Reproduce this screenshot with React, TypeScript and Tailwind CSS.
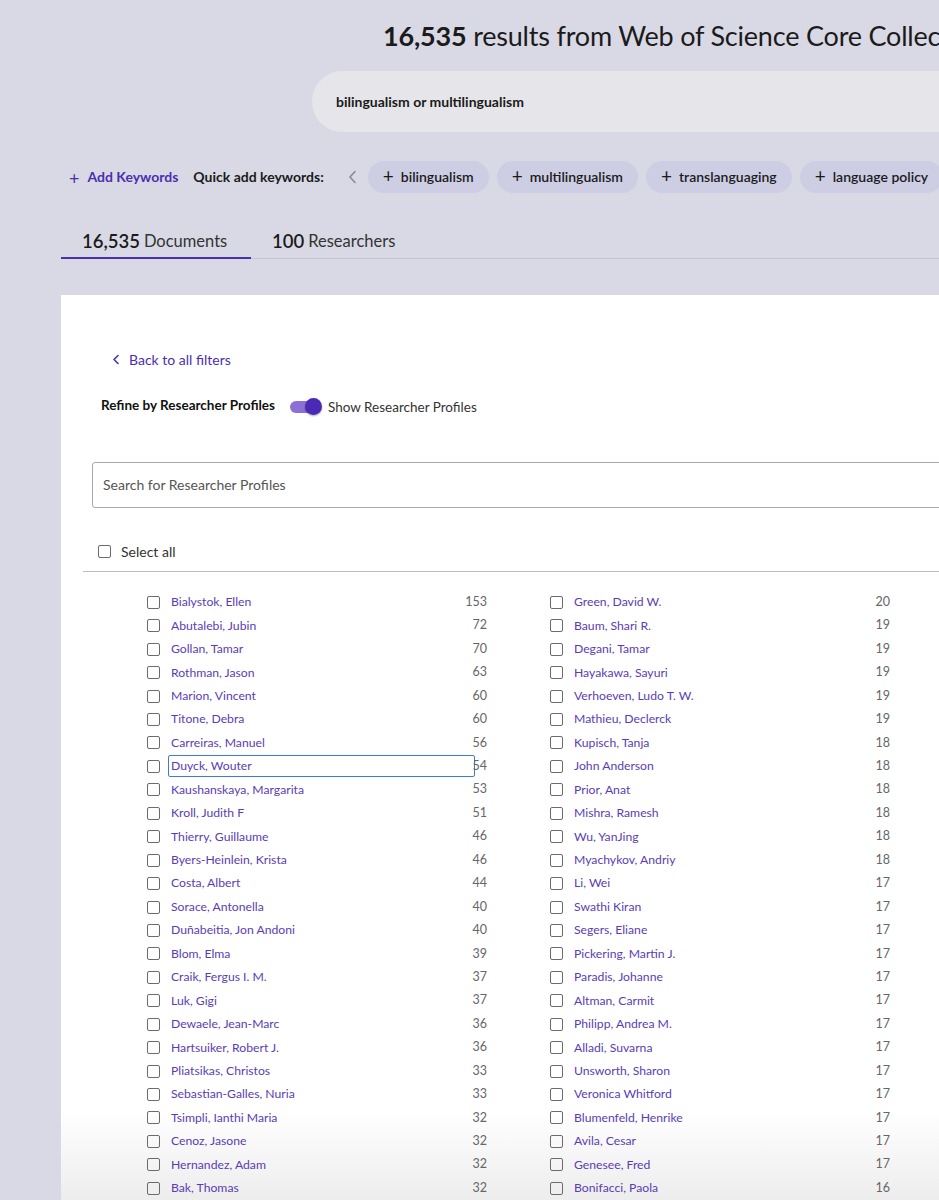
import React from "react";

const left: [string, number][] = [
  ["Bialystok, Ellen", 153],
  ["Abutalebi, Jubin", 72],
  ["Gollan, Tamar", 70],
  ["Rothman, Jason", 63],
  ["Marion, Vincent", 60],
  ["Titone, Debra", 60],
  ["Carreiras, Manuel", 56],
  ["Duyck, Wouter", 54],
  ["Kaushanskaya, Margarita", 53],
  ["Kroll, Judith F", 51],
  ["Thierry, Guillaume", 46],
  ["Byers-Heinlein, Krista", 46],
  ["Costa, Albert", 44],
  ["Sorace, Antonella", 40],
  ["Duñabeitia, Jon Andoni", 40],
  ["Blom, Elma", 39],
  ["Craik, Fergus I. M.", 37],
  ["Luk, Gigi", 37],
  ["Dewaele, Jean-Marc", 36],
  ["Hartsuiker, Robert J.", 36],
  ["Pliatsikas, Christos", 33],
  ["Sebastian-Galles, Nuria", 33],
  ["Tsimpli, Ianthi Maria", 32],
  ["Cenoz, Jasone", 32],
  ["Hernandez, Adam", 32],
  ["Bak, Thomas", 32],
];

const right: [string, number][] = [
  ["Green, David W.", 20],
  ["Baum, Shari R.", 19],
  ["Degani, Tamar", 19],
  ["Hayakawa, Sayuri", 19],
  ["Verhoeven, Ludo T. W.", 19],
  ["Mathieu, Declerck", 19],
  ["Kupisch, Tanja", 18],
  ["John Anderson", 18],
  ["Prior, Anat", 18],
  ["Mishra, Ramesh", 18],
  ["Wu, YanJing", 18],
  ["Myachykov, Andriy", 18],
  ["Li, Wei", 17],
  ["Swathi Kiran", 17],
  ["Segers, Eliane", 17],
  ["Pickering, Martin J.", 17],
  ["Paradis, Johanne", 17],
  ["Altman, Carmit", 17],
  ["Philipp, Andrea M.", 17],
  ["Alladi, Suvarna", 17],
  ["Unsworth, Sharon", 17],
  ["Veronica Whitford", 17],
  ["Blumenfeld, Henrike", 17],
  ["Avila, Cesar", 17],
  ["Genesee, Fred", 17],
  ["Bonifacci, Paola", 16],
];

function Box() {
  return <span className="block w-[13px] h-[13px] shrink-0 border-[1.5px] border-[#6b6b6b] rounded-[2px]" />;
}

function Row({ name, count, focused }: { name: string; count: number; focused?: boolean }) {
  return (
    <div className="flex items-center h-[23.45px]">
      <Box />
      <span
        className={
          "ml-[9px] w-[305px] shrink-0 h-[20px] flex items-center pl-[2px] text-[12.2px] text-[#5a3db5] whitespace-nowrap " +
          (focused ? "outline outline-[1.5px] outline-[#3b7bdb] rounded-[1px]" : "")
        }
      >
        {name}
      </span>
      <span className="ml-[-30px] w-[43px] text-right text-[12.5px] text-[#666]">{count}</span>
    </div>
  );
}

function Chip({ label }: { label: string }) {
  return (
    <div className="h-[32px] rounded-full bg-[#cdcde4] flex items-center px-[15px] gap-[7px] text-[14px] font-semibold text-[#1b1b1b] whitespace-nowrap shrink-0">
      <span className="text-[19px] font-normal leading-none mt-[-2px]">+</span>
      <span>{label}</span>
    </div>
  );
}

export default function App() {
  return (
    <div
      className="relative w-full h-[1200px] overflow-hidden bg-[#d9d9e5] text-[#1b1b1b]"
      style={{ fontFamily: "Lato, 'Noto Sans', sans-serif" }}
    >
      <div className="flex flex-col w-[1300px] h-full">
        {/* header */}
        <div className="pt-[20px] pl-[383px] h-[73px] whitespace-nowrap text-[27px] leading-[32px] tracking-[-0.2px]">
          <span className="font-bold">16,535</span> results from Web of Science Core Collection
        </div>

        {/* search pill */}
        <div className="ml-[312px] w-[900px] h-[62px] rounded-[31px] bg-[#e6e6ea] flex items-center pl-[24px] text-[14px] font-bold">
          bilingualism or multilingualism
        </div>

        {/* keywords */}
        <div className="mt-[29px] h-[32px] ml-[69px] flex items-center whitespace-nowrap">
          <span className="text-[#4b2fb0] text-[18px] leading-none mt-[2px]">+</span>
          <span className="ml-[8px] text-[14px] font-bold text-[#4b2fb0]">Add Keywords</span>
          <span className="ml-[15px] text-[14px] font-bold">Quick add keywords:</span>
          <svg className="ml-[24px]" width="9" height="14" viewBox="0 0 9 14" fill="none">
            <path d="M7 1.5 L2 7 L7 12.5" stroke="#8a8a96" strokeWidth="1.6" strokeLinecap="round" strokeLinejoin="round" />
          </svg>
          <div className="ml-[11px] flex gap-[8px]">
            <Chip label="bilingualism" />
            <Chip label="multilingualism" />
            <Chip label="translanguaging" />
            <Chip label="language policy" />
          </div>
        </div>

        {/* tabs */}
        <div className="mt-[28px] ml-[61px] flex border-b border-[#c4c4cf] h-[39px]">
          <div className="w-[190px] border-b-2 border-[#4b2fb0] mb-[-1px] pl-[21px] pt-[8px] flex items-start whitespace-nowrap">
            <span className="text-[18.5px] font-semibold leading-[24px]">16,535</span>
            <span className="ml-[4px] text-[16.5px] leading-[24px] text-[#333]">Documents</span>
          </div>
          <div className="ml-[21px] pt-[8px] flex items-start whitespace-nowrap">
            <span className="text-[18.5px] font-semibold leading-[24px]">100</span>
            <span className="ml-[4px] text-[16.5px] leading-[24px] text-[#333]">Researchers</span>
          </div>
        </div>

        {/* white panel */}
        <div className="mt-[36px] ml-[61px] flex-1 bg-[linear-gradient(to_bottom,#ffffff_calc(100%-90px),#ededed)] relative">
          <div className="pt-[54px] pl-[51px] flex items-center text-[14px] text-[#4b2fb0]">
            <svg width="8" height="11" viewBox="0 0 8 11" fill="none">
              <path d="M6 1.5 L2 5.5 L6 9.5" stroke="#4b2fb0" strokeWidth="1.6" strokeLinecap="round" strokeLinejoin="round" />
            </svg>
            <span className="ml-[9px]">Back to all filters</span>
          </div>

          <div className="mt-[27px] pl-[40px] flex items-center h-[20px]">
            <span className="text-[13.5px] font-bold text-[#111] mt-[-3px]">Refine by Researcher Profiles</span>
            <div className="relative ml-[15px] w-[32px] h-[18px] flex items-center">
              <span className="block w-[26px] h-[12px] rounded-full bg-[#8c70d8]" />
              <span className="absolute left-[15px] top-[0.5px] w-[17px] h-[17px] rounded-full bg-[#4a2ab5] shadow-[0_1px_2px_rgba(0,0,0,0.35)]" />
            </div>
            <span className="ml-[6px] text-[13.5px] text-[#333]">Show Researcher Profiles</span>
          </div>

          <div className="mt-[45px] ml-[31px] w-[1000px] h-[46px] border border-[#a9a9a9] rounded-[3px] flex items-center pl-[10px] text-[14px] text-[#555]">
            Search for Researcher Profiles
          </div>

          <div className="mt-[37px] ml-[37px] flex items-center h-[14px]">
            <Box />
            <span className="ml-[10px] text-[14px] text-[#333]">Select all</span>
          </div>

          <div className="mt-[12px] ml-[22px] border-t border-[#bdbdbd]" />

          <div className="mt-[19px] ml-[86px] flex gap-[63px]">
            <div className="w-[340px]">
              {left.map(([n, c]) => (
                <Row key={n} name={n} count={c} focused={n === "Duyck, Wouter"} />
              ))}
            </div>
            <div className="w-[340px]">
              {right.map(([n, c]) => (
                <Row key={n} name={n} count={c} />
              ))}
            </div>
          </div>
        </div>
      </div>
    </div>
  );
}
